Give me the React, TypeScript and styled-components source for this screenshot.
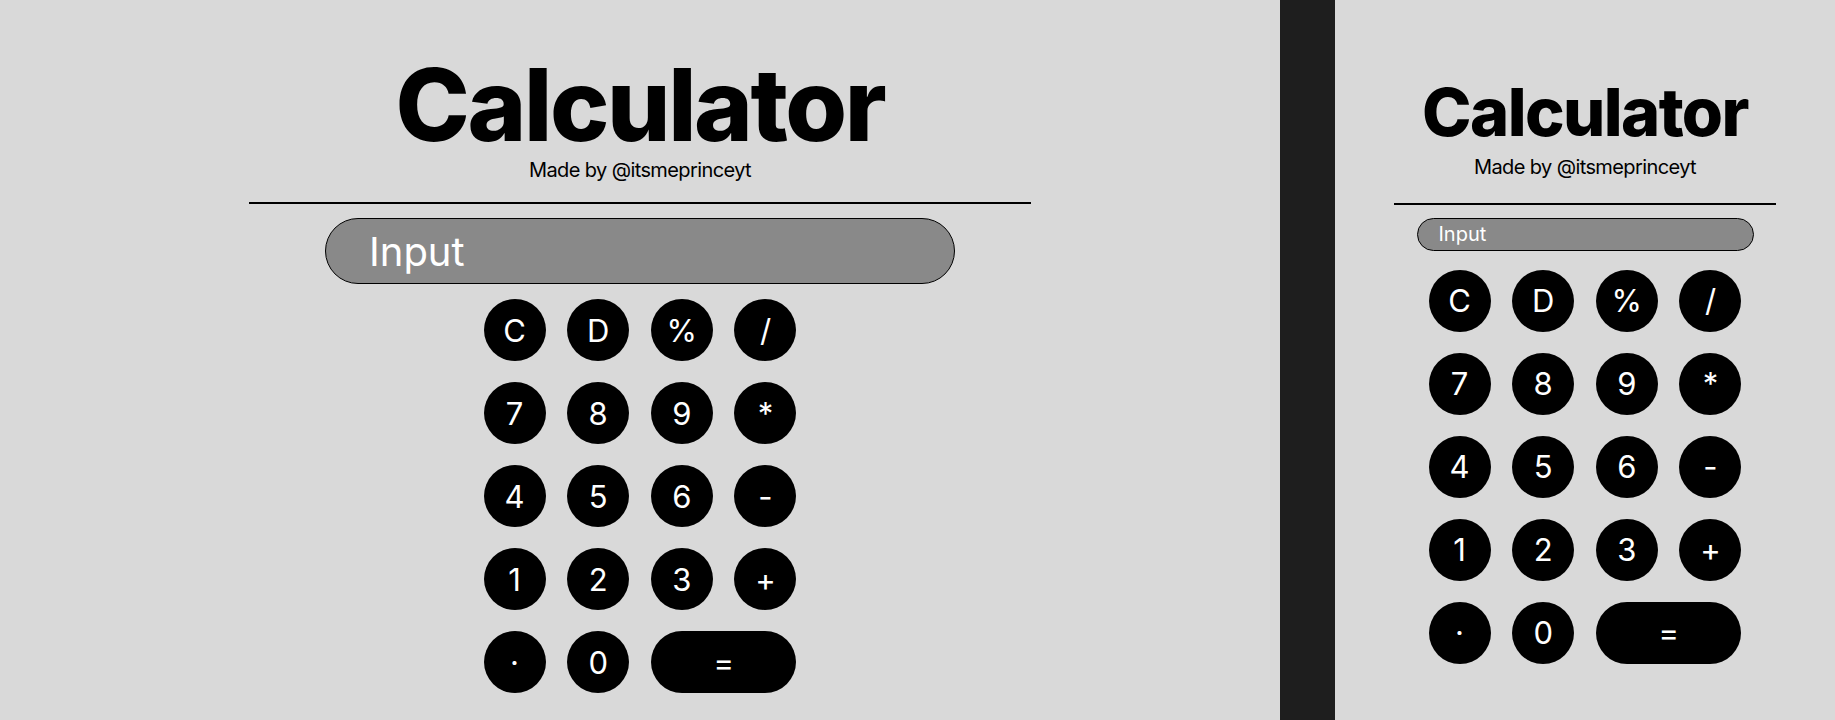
import styled, { createGlobalStyle } from "styled-components"

const GlobalStyle = createGlobalStyle`
  html, body {
    margin: 0;
    padding: 0;
    height: 100%;
    background-color: #d9d9d9;
    font-family: Inter, "Noto Sans", sans-serif;
  }
  #root {
    height: 100%;
  }
`

type Size = "large" | "small"

const sizes = {
  large: {
    width: 1280,
    padTop: 55,
    titleSize: 100,
    subGap: 3,
    lineGap: 20,
    lineWidth: 782,
    inputGap: 14,
    inputWidth: 630,
    inputHeight: 66,
    inputFont: 40,
    inputPad: 43,
    gridGap: 15,
  },
  small: {
    width: 500,
    padTop: 79,
    titleSize: 66.67,
    subGap: 9.7,
    lineGap: 23.3,
    lineWidth: 382,
    inputGap: 13,
    inputWidth: 337,
    inputHeight: 33,
    inputFont: 20,
    inputPad: 21,
    gridGap: 19,
  },
}

const keys = [
  "C", "D", "%", "/",
  "7", "8", "9", "*",
  "4", "5", "6", "-",
  "1", "2", "3", "+",
  "·", "0",
]

function Calculator({ size }: { size: Size }) {
  return (
    <Panel $size={size}>
      <Title $size={size}>Calculator</Title>
      <Credit $size={size}>Made by @itsmeprinceyt</Credit>
      <Rule $size={size} />
      <Display $size={size} placeholder="Input" readOnly />
      <Keypad $size={size}>
        {keys.map(k => (
          <Key key={k}>{k}</Key>
        ))}
        <Key $wide>=</Key>
      </Keypad>
    </Panel>
  )
}

export default function App() {
  return (
    <>
      <GlobalStyle />
      <Canvas>
        <Calculator size="large" />
        <Divider />
        <Calculator size="small" />
      </Canvas>
    </>
  )
}

const Canvas = styled.div`
  display: flex;
  height: 100vh;
  overflow: hidden;
`

const Divider = styled.div`
  width: 55px;
  flex-shrink: 0;
  background-color: #1e1e1e;
`

const Panel = styled.div<{ $size: Size }>`
  width: ${p => sizes[p.$size].width}px;
  flex-shrink: 0;
  padding-top: ${p => sizes[p.$size].padTop}px;
  box-sizing: border-box;
  display: flex;
  flex-direction: column;
  align-items: center;
  background-color: #d9d9d9;
`

const Title = styled.h1<{ $size: Size }>`
  margin: 0;
  font-family: Inter, sans-serif;
  font-weight: 800;
  font-size: ${p => sizes[p.$size].titleSize}px;
  line-height: ${p => sizes[p.$size].titleSize}px;
  color: #000;
  letter-spacing: -0.024em;
`

const Credit = styled.p<{ $size: Size }>`
  margin: ${p => sizes[p.$size].subGap}px 0 0;
  font-family: Inter, sans-serif;
  font-size: 20px;
  line-height: 24px;
  letter-spacing: -0.6px;
  color: #000;
`

const Rule = styled.hr<{ $size: Size }>`
  width: ${p => sizes[p.$size].lineWidth}px;
  height: 2px;
  margin: ${p => sizes[p.$size].lineGap}px 0 0;
  border: 0;
  background-color: #000;
`

const Display = styled.input<{ $size: Size }>`
  width: ${p => sizes[p.$size].inputWidth}px;
  height: ${p => sizes[p.$size].inputHeight}px;
  margin-top: ${p => sizes[p.$size].inputGap}px;
  padding: 0 0 0 ${p => sizes[p.$size].inputPad}px;
  box-sizing: border-box;
  background-color: #898989;
  border: 1px solid #000;
  border-radius: 999px;
  font-family: Inter, sans-serif;
  font-size: ${p => sizes[p.$size].inputFont}px;
  color: #fff;
  outline: none;

  &::placeholder {
    color: #fff;
    opacity: 1;
  }
`

const Keypad = styled.div<{ $size: Size }>`
  margin-top: ${p => sizes[p.$size].gridGap}px;
  display: grid;
  grid-template-columns: repeat(4, 62px);
  grid-auto-rows: 62px;
  column-gap: 21.67px;
  row-gap: 21px;
`

const Key = styled.button<{ $wide?: boolean }>`
  grid-column: ${p => (p.$wide ? "span 2" : "auto")};
  display: flex;
  align-items: center;
  justify-content: center;
  padding: 0;
  border: 0;
  border-radius: 999px;
  background-color: #000;
  color: #fff;
  font-family: Inter, sans-serif;
  font-size: 31px;
  font-weight: 400;
  cursor: pointer;
`
